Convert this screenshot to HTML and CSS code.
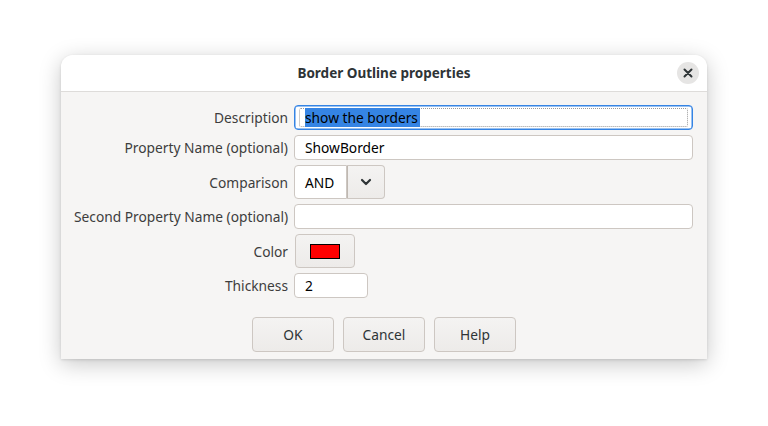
FILE: index.html
```html
<!DOCTYPE html>
<html>
<head>
<meta charset="utf-8">
<link rel="stylesheet" href="styles.css">
</head>
<body>
<div class="dialog">
  <div class="header">
    <div class="title">Border Outline properties</div>
    <div class="close"><svg width="10" height="10" viewBox="0 0 10 10"><path d="M1.5 1.5 L8.5 8.5 M8.5 1.5 L1.5 8.5" stroke="#2e3436" stroke-width="2" stroke-linecap="round"/></svg></div>
  </div>
  <div class="body">
    <div class="form">
      <div class="label">Description</div>
      <div class="field entry focused"><div class="focusrect"><span class="sel">show the borders</span></div></div>

      <div class="label">Property Name (optional)</div>
      <div class="field entry"><span class="txt">ShowBorder</span></div>

      <div class="label">Comparison</div>
      <div class="field combo">
        <div class="combo-text">AND</div>
        <div class="combo-btn"><svg width="12" height="8" viewBox="0 0 12 8"><path d="M2 2 L6 6 L10 2" fill="none" stroke="#2e3436" stroke-width="2.2" stroke-linecap="round" stroke-linejoin="round"/></svg></div>
      </div>

      <div class="label">Second Property Name (optional)</div>
      <div class="field entry"></div>

      <div class="label">Color</div>
      <div class="field"><div class="color-btn"><div class="swatch"></div></div></div>

      <div class="label">Thickness</div>
      <div class="field"><div class="entry small"><span class="txt">2</span></div></div>
    </div>
    <div class="buttons">
      <div class="btn">OK</div>
      <div class="btn">Cancel</div>
      <div class="btn">Help</div>
    </div>
  </div>
</div>
</body>
</html>
```
FILE: styles.css
```css
html, body {
  margin: 0;
  padding: 0;
  background: #ffffff;
}
body {
  padding: 55px 0 0 61px;
  min-height: 426px;
  box-sizing: border-box;
  font-family: "Noto Sans", "DejaVu Sans", sans-serif;
  font-size: 13.75px;
  color: #2e3436;
}
.dialog {
  width: 646px;
  height: 304px;
  background: #f6f5f4;
  border-radius: 12px 12px 0 0;
  box-shadow: 0 5px 22px rgba(0,0,0,0.22), 0 1px 3px rgba(0,0,0,0.12);
  display: flex;
  flex-direction: column;
}
.header {
  height: 36px;
  background: #ffffff;
  border-bottom: 1px solid #dedcda;
  border-radius: 12px 12px 0 0;
  display: flex;
  align-items: center;
  justify-content: center;
  position: relative;
}
.title {
  font-weight: bold;
  font-size: 13.5px;
  color: #2e3436;
}
.close {
  position: absolute;
  right: 8px;
  top: 7px;
  width: 22px;
  height: 22px;
  border-radius: 50%;
  background: #e6e5e4;
  display: flex;
  align-items: center;
  justify-content: center;
}
.body {
  padding: 13px 14px 0 13px;
  display: flex;
  flex-direction: column;
}
.form {
  display: grid;
  grid-template-columns: 214px 1fr;
  column-gap: 6px;
  row-gap: 5px;
  align-items: center;
}
.label {
  text-align: right;
  color: #3d3d3d;
  white-space: nowrap;
}
.field {
  display: flex;
}
.entry {
  height: 25px;
  box-sizing: border-box;
  background: #ffffff;
  border: 1px solid #cdc7c2;
  border-radius: 4px;
  display: flex;
  align-items: center;
  padding-left: 10px;
  color: #000;
}
.entry.focused {
  border-color: #3584e4;
  box-shadow: inset 0 0 0 0.5px #3584e4;
  padding: 3px 4px;
}
.focusrect {
  flex: 1;
  height: 17px;
  border: 1px dotted #9a9a9a;
  border-radius: 2px;
  display: flex;
  align-items: center;
  padding-left: 5px;
}
.sel {
  background: #3584e4;
  color: #000;
  line-height: 19px;
  height: 19px;
  padding-right: 2px;
}
.txt {
  line-height: 20px;
}
.entry.small {
  width: 74px;
}
.combo {
  height: 34px;
}
.combo-text {
  width: 53px;
  box-sizing: border-box;
  background: #ffffff;
  border: 1px solid #cdc7c2;
  border-radius: 4px 0 0 4px;
  display: flex;
  align-items: center;
  padding-left: 10px;
  color: #000;
}
.combo-btn {
  width: 38px;
  box-sizing: border-box;
  background: linear-gradient(#f4f3f2, #edebe9);
  border: 1px solid #cdc7c2;
  border-left: 1px solid #bfb8b1;
  border-radius: 0 4px 4px 0;
  display: flex;
  align-items: center;
  justify-content: center;
}
.color-btn {
  width: 60px;
  height: 34px;
  box-sizing: border-box;
  background: linear-gradient(#f4f3f2, #edebe9);
  border: 1px solid #cdc7c2;
  border-radius: 4px;
  display: flex;
  align-items: center;
  justify-content: center;
  margin-left: 1px;
}
.swatch {
  width: 28px;
  height: 13px;
  background: #ff0000;
  border: 1px solid #000;
}
.buttons {
  display: flex;
  justify-content: center;
  gap: 9px;
  margin-top: 19px;
  padding-left: 1px;
}
.btn {
  width: 82px;
  height: 35px;
  box-sizing: border-box;
  background: linear-gradient(#f4f3f2, #edebe9);
  border: 1px solid #cdc7c2;
  border-radius: 4px;
  display: flex;
  align-items: center;
  justify-content: center;
  color: #2e3436;
}
```
